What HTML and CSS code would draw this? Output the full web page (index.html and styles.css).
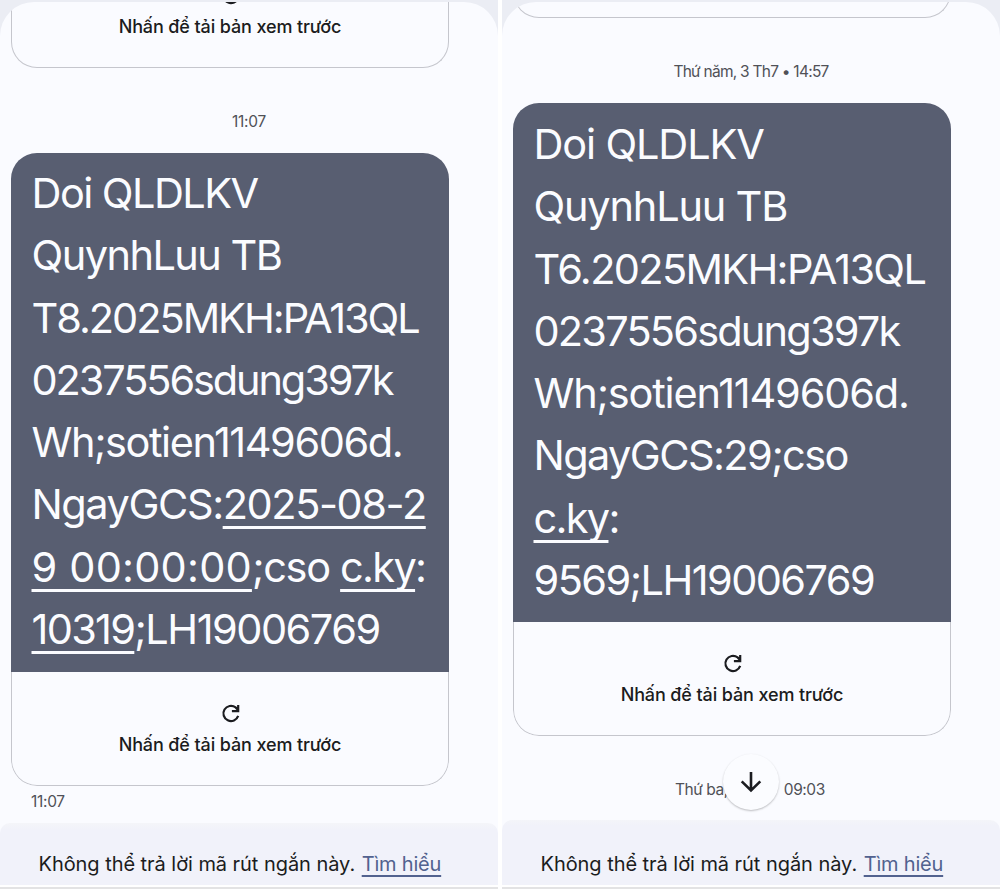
FILE: index.html
```
<!DOCTYPE html>
<html lang="vi">
<head>
  <meta charset="UTF-8">
  <meta name="viewport" content="width=device-width, initial-scale=1.0">
  <title>Tin nhắn</title>
  <link rel="stylesheet" href="styles.css">
</head>
<body>
  <svg class="defs" aria-hidden="true">
    <symbol id="reload" viewBox="0 0 19 19">
      <path d="M17.2 11.9A7.6 7.6 0 1 1 14.6 3.4L17 6M17.2 1V7.1H10.9" fill="none" stroke="currentColor" stroke-width="2.2"/>
    </symbol>
  </svg>

  <div class="screens">
    <div class="phone left">
      <div class="thread">
        <div class="preview cut">
          <svg class="reload"><use href="#reload"/></svg>
          <span>Nhấn để tải bản xem trước</span>
        </div>
        <div class="stamp">11:07</div>
        <div class="card">
          <div class="message">
            <div class="l1">Doi QLDLKV</div>
            <div class="l2">QuynhLuu TB</div>
            <div class="l3">T8.2025MKH:PA13QL</div>
            <div class="l4">0237556sdung397k</div>
            <div class="l5">Wh;sotien1149606d.</div>
            <div class="l6">NgayGCS:<u>2025-08-2</u></div>
            <div class="l7"><u class="time">9 00:00:00</u>;cso <u class="ky">c.ky</u>:</div>
            <div class="l8"><u class="num">10319</u>;LH19006769</div>
          </div>
          <div class="preview">
            <svg class="reload"><use href="#reload"/></svg>
            <span>Nhấn để tải bản xem trước</span>
          </div>
        </div>
        <div class="sent">11:07</div>
      </div>
      <div class="footer">Không thể trả lời mã rút ngắn này. <a>Tìm hiểu</a></div>
    </div>

    <div class="phone right">
      <div class="thread">
        <div class="preview cut"></div>
        <div class="stamp">Thứ năm, 3 Th7 • 14:57</div>
        <div class="card">
          <div class="message">
            <div class="l1">Doi QLDLKV</div>
            <div class="l2">QuynhLuu TB</div>
            <div class="l3">T6.2025MKH:PA13QL</div>
            <div class="l4">0237556sdung397k</div>
            <div class="l5">Wh;sotien1149606d.</div>
            <div class="l6">NgayGCS:29;cso</div>
            <div class="l7"><u class="ky">c.ky</u>:</div>
            <div class="l8">9569;LH19006769</div>
          </div>
          <div class="preview">
            <svg class="reload"><use href="#reload"/></svg>
            <span>Nhấn để tải bản xem trước</span>
          </div>
        </div>
        <div class="next">
          <span>Thứ ba,</span>
          <span>09:03</span>
          <div class="down">
            <svg viewBox="0 0 22 22"><path d="M11 1V19M1.7 10.4L11 19.5L20.3 10.4" fill="none" stroke="currentColor" stroke-width="2.6"/></svg>
          </div>
        </div>
      </div>
      <div class="footer">Không thể trả lời mã rút ngắn này. <a>Tìm hiểu</a></div>
    </div>
  </div>
</body>
</html>
```
FILE: styles.css
```
body {
  margin: 0;
  background: #fff;
  font-family: Inter, "Noto Sans", sans-serif;
  color: #1b1c20;
}

.defs {
  display: none;
}

.screens {
  display: flex;
  gap: 4px;
  height: 896px;
  overflow: hidden;
}

.phone {
  display: flex;
  flex-direction: column;
  width: 498px;
  height: 885px;
  box-sizing: border-box;
  padding-top: 2px;
  background: linear-gradient(#ebedf4 60px, #fafbff 60px);
  box-shadow: 0 2px 0 #fff, 0 4px 0 #e3e3e4;
}

.thread {
  flex: 1;
  min-height: 0;
  overflow: hidden;
  border-radius: 34px 34px 0 0;
  background: #fafbff;
}

.card,
.preview.cut {
  width: 438px;
  margin-left: 11px;
  box-sizing: border-box;
}

.card {
  border-radius: 26px;
  overflow: hidden;
}

.message {
  height: 519px;
  box-sizing: border-box;
  padding: 9px 0 0 20.5px;
  background: #585e71;
  color: #fbfcff;
  font-size: 41.5px;
  line-height: 62.3px;
  white-space: nowrap;
}

.right .message {
  padding-top: 10px;
}

.message u {
  text-decoration-thickness: 3px;
  text-underline-offset: 7px;
  text-decoration-skip-ink: none;
}

/* letter fit of each line */
.left .l1 { letter-spacing: -1.55px; }
.left .l2 { letter-spacing: -1.55px; }
.left .l3 { letter-spacing: -2.05px; }
.left .l4 { letter-spacing: -2.13px; }
.left .l5 { letter-spacing: -1.45px; }
.left .l6 { letter-spacing: -1.43px; }
.left .l7 { letter-spacing: -1.3px; }
.left .l8 { letter-spacing: -1.5px; }
.right .l1 { letter-spacing: -1.15px; }
.right .l2 { letter-spacing: -1.2px; }
.right .l3 { letter-spacing: -1.68px; }
.right .l4 { letter-spacing: -1.82px; }
.right .l5 { letter-spacing: -1.2px; }
.right .l6 { letter-spacing: -1.6px; }
.right .l7 { letter-spacing: -1.3px; }
.right .l8 { letter-spacing: -1.58px; }
.message .time { letter-spacing: 0.2px; }
.message .ky,
.message .num { letter-spacing: -1.7px; }

.preview {
  display: flex;
  flex-direction: column;
  align-items: center;
  height: 114px;
  box-sizing: border-box;
  padding-top: 32px;
  border: 1px solid #c5c6cd;
  border-top: 0;
  border-radius: 0 0 26px 26px;
  font-size: 18px;
  font-weight: 500;
  line-height: 24px;
  letter-spacing: -0.12px;
}

.reload {
  width: 19px;
  height: 19px;
  margin-bottom: 10px;
}

.left .cut {
  margin-top: -48px;
}

.right .cut {
  margin-top: -98px;
}

.stamp,
.sent,
.next {
  font-size: 15.5px;
  line-height: 20px;
  letter-spacing: -0.75px;
  color: #505157;
}

.stamp {
  height: 85px;
  box-sizing: border-box;
  padding-top: 44px;
  text-align: center;
}

.left .stamp,
.sent {
  letter-spacing: -0.3px;
}

.sent {
  margin: 6px 0 0 31px;
}

.next {
  position: relative;
  display: flex;
  gap: 56px;
  margin: 44px 0 0 173px;
  letter-spacing: -0.45px;
}

.down {
  position: absolute;
  left: 48px;
  top: -26px;
  display: flex;
  align-items: center;
  justify-content: center;
  width: 56px;
  height: 56px;
  border-radius: 50%;
  background: #fbfcff;
  box-shadow: 0 1px 2px rgba(0, 0, 0, 0.25);
  color: #1b1c20;
}

.down svg {
  width: 22px;
  height: 22px;
}

.footer {
  height: 62px;
  box-sizing: border-box;
  padding: 29px 0 0 38.5px;
  border-radius: 10px 10px 0 0;
  background: linear-gradient(#f4f5f9, #f1f2fa 6px);
  font-size: 20px;
  line-height: 24px;
  letter-spacing: -0.05px;
  white-space: nowrap;
}

.footer a {
  margin-left: 1px;
  color: #52628f;
  letter-spacing: -0.2px;
  text-decoration: underline;
  text-decoration-thickness: 2px;
  text-underline-offset: 4px;
  text-decoration-skip-ink: none;
}

.right .footer {
  height: 65px;
  padding-top: 32px;
}
```
